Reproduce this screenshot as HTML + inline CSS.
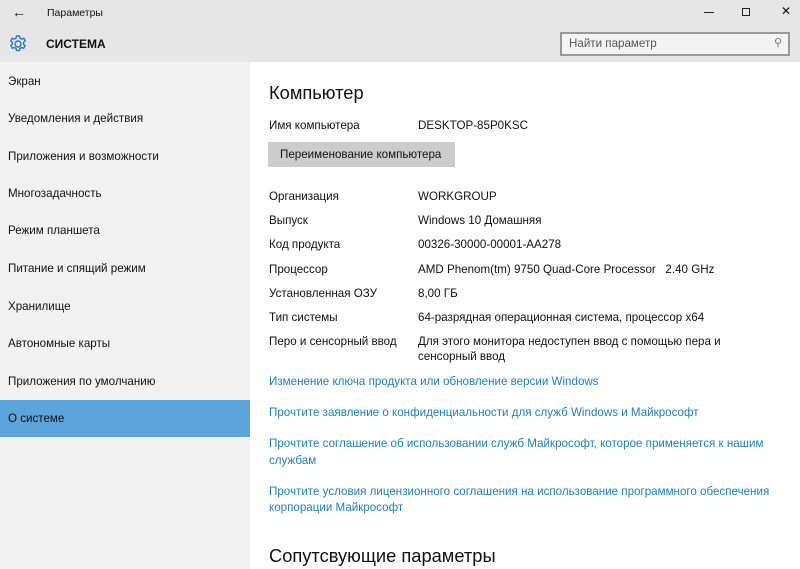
<!DOCTYPE html>
<html><head><meta charset="utf-8"><style>
*{margin:0;padding:0;box-sizing:border-box}
body{width:800px;height:569px;overflow:hidden;background:#fff;font-family:"Liberation Sans","Noto Sans CJK SC",sans-serif;font-size:11.6px;color:#111;position:relative}
.a{position:absolute;white-space:nowrap;line-height:16px}
#hdr{position:absolute;left:0;top:0;width:800px;height:62px;background:#e6e6e6}
#side{position:absolute;left:0;top:62px;width:250px;height:507px;background:#f2f2f2}
.si{position:absolute;left:8px;font-size:11.6px;line-height:16px}
.lk{color:#1f7fc0;font-size:11.6px}
.lb{left:269px;font-size:11.6px}
.v{left:418px;font-size:11.6px}
</style></head><body>
<div id="hdr"></div>
<div id="side"></div>
<div class="a" style="left:12px;top:4px;font-size:14px">←</div>
<div class="a" style="left:47px;top:5px;font-size:10.5px">Параметры</div>
<div style="position:absolute;left:704px;top:12px;width:10px;height:1px;background:#222"></div>
<div style="position:absolute;left:742px;top:8px;width:8px;height:8px;border:1.2px solid #222"></div>
<div class="a" style="left:781px;top:3px;font-size:12px">✕</div>
<svg style="position:absolute;left:8px;top:34px" width="20" height="20" viewBox="0 0 20 20"><g fill="none" stroke="#2b78c5" stroke-width="1.4"><circle cx="10" cy="10" r="3"/><path d="M8.5 2h3l.5 2.2 1.6.9 2.1-.8 1.5 2.6-1.7 1.5v1.8l1.7 1.5-1.5 2.6-2.1-.8-1.6.9-.5 2.2h-3l-.5-2.2-1.6-.9-2.1.8-1.5-2.6 1.7-1.5V8.4L2.7 6.9l1.5-2.6 2.1.8 1.6-.9z"/></g></svg>
<div class="a" style="left:46px;top:36px;font-size:12px;font-weight:bold">СИСТЕМА</div>
<div style="position:absolute;left:560px;top:32px;width:230px;height:24px;border:2px solid #999;background:#f4f4f4"></div>
<div class="a" style="left:569px;top:36px;font-size:11.6px;color:#555">Найти параметр</div>
<div class="a" style="left:774px;top:35px;font-size:11px;color:#777">⚲</div>
<div style="position:absolute;left:0;top:400px;width:250px;height:37px;background:#5ba4dc"></div>
<div class="si" style="top:74px">Экран</div>
<div class="si" style="top:111px">Уведомления и действия</div>
<div class="si" style="top:149px">Приложения и возможности</div>
<div class="si" style="top:186px">Многозадачность</div>
<div class="si" style="top:223px">Режим планшета</div>
<div class="si" style="top:261px">Питание и спящий режим</div>
<div class="si" style="top:299px">Хранилище</div>
<div class="si" style="top:336px">Автономные карты</div>
<div class="si" style="top:374px">Приложения по умолчанию</div>
<div class="si" style="top:411px">О системе</div>
<div class="a" style="left:269px;top:82px;font-size:18.3px;line-height:22px">Компьютер</div>
<div class="a lb" style="top:118px">Имя компьютера</div><div class="a v" style="top:118px">DESKTOP-85P0KSC</div>
<div style="position:absolute;left:268px;top:142px;width:187px;height:25px;background:#ccc"></div>
<div class="a" style="left:280px;top:147px;font-size:11.6px">Переименование компьютера</div>
<div class="a lb" style="top:189px">Организация</div><div class="a v" style="top:189px">WORKGROUP</div>
<div class="a lb" style="top:213px">Выпуск</div><div class="a v" style="top:213px">Windows 10 Домашняя</div>
<div class="a lb" style="top:237px">Код продукта</div><div class="a v" style="top:237px">00326-30000-00001-AA278</div>
<div class="a lb" style="top:262px">Процессор</div><div class="a v" style="top:262px">AMD Phenom(tm) 9750 Quad-Core Processor &nbsp; 2.40 GHz</div>
<div class="a lb" style="top:286px">Установленная ОЗУ</div><div class="a v" style="top:286px">8,00 ГБ</div>
<div class="a lb" style="top:310px">Тип системы</div><div class="a v" style="top:310px">64-разрядная операционная система, процессор x64</div>
<div class="a lb" style="top:334px">Перо и сенсорный ввод</div><div class="a v" style="top:334px">Для этого монитора недоступен ввод с помощью пера и</div>
<div class="a v" style="top:349px">сенсорный ввод</div>
<div class="a lk" style="left:269px;top:374px">Изменение ключа продукта или обновление версии Windows</div>
<div class="a lk" style="left:269px;top:405px">Прочтите заявление о конфиденциальности для служб Windows и Майкрософт</div>
<div class="a lk" style="left:269px;top:436px">Прочтите соглашение об использовании служб Майкрософт, которое применяется к нашим</div>
<div class="a lk" style="left:269px;top:453px">службам</div>
<div class="a lk" style="left:269px;top:484px">Прочтите условия лицензионного соглашения на использование программного обеспечения</div>
<div class="a lk" style="left:269px;top:500px">корпорации Майкрософт</div>
<div class="a" style="left:269px;top:545px;font-size:18.3px;line-height:22px">Сопутсвующие параметры</div>
</body></html>
